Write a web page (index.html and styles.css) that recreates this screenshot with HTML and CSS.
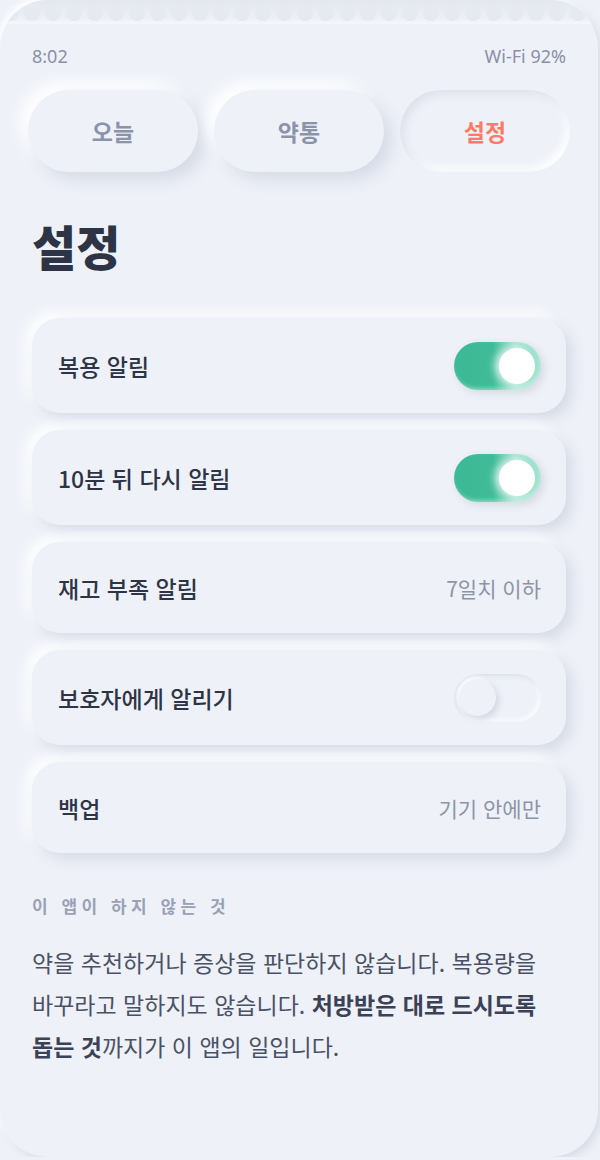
FILE: index.html
```html
<!DOCTYPE html>
<html lang="ko">
<head>
    <meta charset="UTF-8">
    <meta name="viewport" content="width=device-width, initial-scale=1.0">
    <title>설정</title>
    <link rel="stylesheet" href="styles.css">
</head>
<body>
    <div class="phone">
        <div class="perf"></div>
        <div class="status">
            <span>8:02</span>
            <span>Wi-Fi 92%</span>
        </div>

        <nav class="tabs">
            <div class="tab">오늘</div>
            <div class="tab">약통</div>
            <div class="tab active">설정</div>
        </nav>

        <h1 class="title">설정</h1>

        <div class="list">
            <div class="row tall">
                <span class="label">복용 알림</span>
                <span class="toggle on"><span class="knob"></span></span>
            </div>
            <div class="row tall">
                <span class="label">10분 뒤 다시 알림</span>
                <span class="toggle on"><span class="knob"></span></span>
            </div>
            <div class="row">
                <span class="label">재고 부족 알림</span>
                <span class="value">7일치 이하</span>
            </div>
            <div class="row tall">
                <span class="label">보호자에게 알리기</span>
                <span class="toggle"><span class="knob"></span></span>
            </div>
            <div class="row">
                <span class="label">백업</span>
                <span class="value">기기 안에만</span>
            </div>
        </div>

        <h2 class="section">이 앱이 하지 않는 것</h2>
        <p class="note">약을 추천하거나 증상을 판단하지 않습니다. 복용량을 바꾸라고 말하지도 않습니다. <b>처방받은 대로 드시도록 돕는 것</b>까지가 이 앱의 일입니다.</p>
    </div>
</body>
</html>
```

FILE: styles.css
```css
* {
    box-sizing: border-box;
}
body {
    margin: 0;
    background-color: #eef1f8;
    font-family: 'Noto Sans CJK KR', 'Noto Sans', sans-serif;
    color: #2d3446;
}
.phone {
    width: 598px;
    height: 1157px;
    border-radius: 48px;
    background-color: #eef1f8;
    box-shadow: 4px 4px 8px #d9dde6, -3px -3px 6px #ffffff;
    overflow: hidden;
    padding: 0 32px;
}
.perf {
    height: 24px;
    margin: 0 -32px;
    background:
        radial-gradient(circle, #e5e9f0 7.5px, transparent 8.5px) 0.5px 1px / 21px 24px repeat-x,
        linear-gradient(#e4e7ee, #eceff6 75%, #f6f7fb);
}
.status {
    display: flex;
    justify-content: space-between;
    font-family: 'Noto Sans', sans-serif;
    font-size: 18px;
    color: #8a90a6;
    padding-top: 19px;
    line-height: 26px;
}
.tabs {
    display: flex;
    gap: 16px;
    margin: 21px -4px 0;
}
.tab {
    flex: 1;
    height: 82px;
    border-radius: 41px;
    display: flex;
    align-items: center;
    justify-content: center;
    font-size: 23px;
    font-weight: 700;
    color: #8b93ab;
    background-color: #eef1f8;
    box-shadow: 8px 8px 16px #d6dbe6, -8px -8px 16px #ffffff;
}
.tab.active {
    color: #ff7a66;
    box-shadow: inset 4px 4px 8px #dde1ea, inset -4px -4px 8px #ffffff;
}
.title {
    font-size: 48px;
    font-weight: 900;
    margin: 43px 0 43px;
    line-height: 60px;
    color: #2d3446;
}
.list {
    display: flex;
    flex-direction: column;
    gap: 17px;
}
.row {
    height: 91px;
    border-radius: 28px;
    display: flex;
    align-items: center;
    justify-content: space-between;
    padding: 0 25px 0 26px;
    background-color: #eef1f8;
    box-shadow: 6px 6px 14px #d5dae5, -6px -6px 14px #ffffff;
}
.row.tall {
    height: 95px;
}
.label {
    font-size: 23px;
    font-weight: 500;
    color: #2d3446;
}
.value {
    font-size: 21px;
    color: #8d94a8;
}
.toggle {
    width: 87px;
    height: 48px;
    border-radius: 24px;
    display: flex;
    align-items: center;
    padding: 0 6px;
    background-color: #eef1f8;
    box-shadow: inset 2px 2px 5px #d9dde6, inset -2px -2px 5px #ffffff;
}
.toggle.on {
    justify-content: flex-end;
    background: linear-gradient(90deg, #3bb894 0%, #3fbb98 45%, #a7e4d2 70%, #8fdcc5 100%);
    box-shadow: 3px 3px 8px #d3d8e2, inset -2px -2px 4px rgba(255,255,255,0.4);
}
.knob {
    width: 36px;
    height: 36px;
    border-radius: 50%;
    background-color: #eef1f8;
}
.toggle.on .knob {
    background-color: #ffffff;
    box-shadow: -4px 0 8px rgba(255, 255, 255, 0.8);
}
.toggle:not(.on) .knob {
    width: 37px;
    height: 37px;
    margin-left: -1px;
    box-shadow: 3px 3px 6px #d3d7e1, -2px -2px 4px #ffffff;
}
.section {
    font-size: 17px;
    font-weight: 700;
    letter-spacing: 4.5px;
    color: #9aa1b5;
    margin: 41px 0 0;
    line-height: 24px;
}
.note {
    font-size: 23px;
    line-height: 42px;
    color: #4a5166;
    margin: 23px 0 0;
    max-width: 530px;
    word-break: keep-all;
}
.note b {
    color: #3b4256;
    font-weight: 700;
}
```
